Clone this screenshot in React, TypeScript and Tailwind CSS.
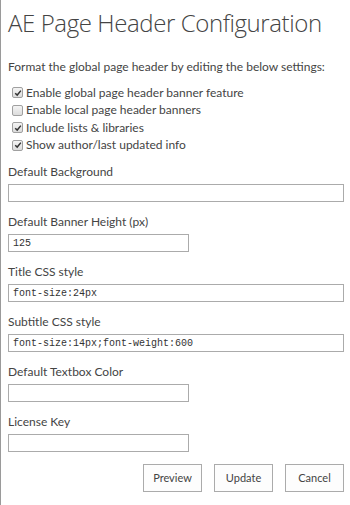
import { useState } from "react";

const options = [
  { label: "Enable global page header banner feature", checked: true },
  { label: "Enable local page header banners", checked: false },
  { label: "Include lists & libraries", checked: true },
  { label: "Show author/last updated info", checked: true },
];

const fields = [
  { label: "Default Background", value: "", wide: true },
  { label: "Default Banner Height (px)", value: "125", wide: false },
  { label: "Title CSS style", value: "font-size:24px", wide: true },
  { label: "Subtitle CSS style", value: "font-size:14px;font-weight:600", wide: true },
  { label: "Default Textbox Color", value: "", wide: false },
  { label: "License Key", value: "", wide: false },
];

function Box({ checked }: { checked: boolean }) {
  return (
    <span className="flex h-[11px] w-[11px] shrink-0 items-center justify-center rounded-[2px] border border-[#a0a0a0] bg-gradient-to-b from-[#f4f4f4] to-[#dcdcdc]">
      {checked && (
        <svg viewBox="0 0 10 10" className="h-[8px] w-[8px]">
          <path d="M1.5 5.2 L4 7.6 L8.6 2" fill="none" stroke="#333" strokeWidth="1.8" />
        </svg>
      )}
    </span>
  );
}

export default function App() {
  const [checks, setChecks] = useState(options.map((o) => o.checked));

  return (
    <div className="h-[505px] w-[350px] overflow-hidden bg-white font-['Lato',sans-serif] text-[#444]">
      <div className="h-full border-l border-[#9a9a9a] pl-[7px]">
        <h1 className="whitespace-nowrap pt-[6px] font-['Open_Sans',sans-serif] text-[24px] leading-[34px] font-light tracking-[-0.4px] text-[#444]">
          AE Page Header Configuration
        </h1>

        <p className="mt-[20px] text-[12px] leading-[14px]">
          Format the global page header by editing the below settings:
        </p>

        <div className="mt-[10px] flex flex-col">
          {options.map((opt, i) => (
            <label
              key={opt.label}
              className="flex h-[17.5px] cursor-pointer items-center gap-[3px] pl-[4px] text-[12px]"
              onClick={() => setChecks(checks.map((c, j) => (j === i ? !c : c)))}
            >
              <Box checked={checks[i]} />
              <span>{opt.label}</span>
            </label>
          ))}
        </div>

        <div className="mt-[8px] flex flex-col gap-[10px]">
          {fields.map((f) => (
            <div key={f.label} className="flex flex-col">
              <span className="h-[22px] text-[12px] leading-[20px]">{f.label}</span>
              <input
                defaultValue={f.value}
                className={`${f.wide ? "w-[336px]" : "w-[181px]"} h-[18px] border border-[#ababab] px-[4px] font-['Liberation_Mono',monospace] text-[10px] text-[#333] outline-none`}
              />
            </div>
          ))}
        </div>

        <div className="mt-[12px] flex justify-end gap-[12px] pr-[6px]">
          {["Preview", "Update", "Cancel"].map((b) => (
            <button
              key={b}
              className="h-[28px] w-[59px] border border-[#ababab] bg-[#fdfdfd] text-[11px] text-[#444]"
            >
              {b}
            </button>
          ))}
        </div>
      </div>
    </div>
  );
}
